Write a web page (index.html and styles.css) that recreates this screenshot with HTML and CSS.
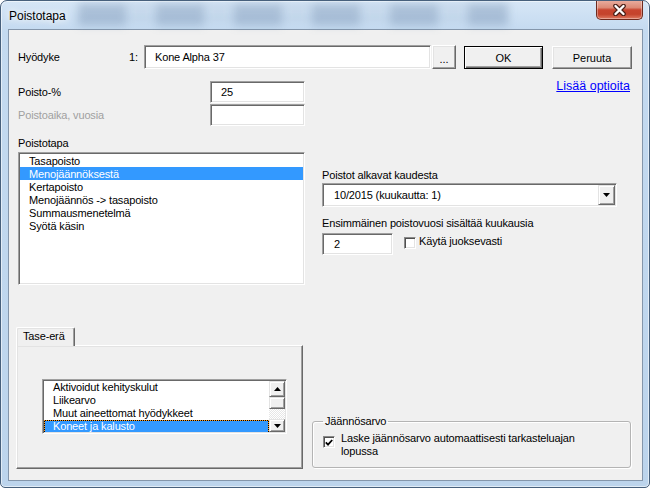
FILE: index.html
```html
<!DOCTYPE html>
<html lang="fi">
<head>
<meta charset="utf-8">
<title>Poistotapa</title>
<link rel="stylesheet" href="styles.css">
</head>
<body>
<div class="window">
  <div class="titlebar">
    <div class="glass"></div>
    <span class="title">Poistotapa</span>
    <button class="close" aria-label="Sulje">
      <svg width="15" height="12" viewBox="0 0 15 12">
        <path d="M3.5 2 L11.5 10 M11.5 2 L3.5 10" stroke="#4a2018" stroke-width="4.6" stroke-linecap="round" fill="none"/>
        <path d="M3.5 2 L11.5 10 M11.5 2 L3.5 10" stroke="#ffffff" stroke-width="2.4" stroke-linecap="round" fill="none"/>
      </svg>
    </button>
  </div>
  <div class="client">
    <div class="row-top">
      <span class="lbl-asset">Hyödyke</span>
      <span class="num">1:</span>
      <div class="field asset">Kone Alpha 37</div>
      <button class="btn dots">...</button>
      <button class="btn ok">OK</button>
      <button class="btn cancel">Peruuta</button>
    </div>
    <div class="cols">
      <div class="col-left">
        <div class="form-row first"><span>Poisto-%</span><div class="field num-field">25</div></div>
        <div class="form-row"><span class="disabled">Poistoaika, vuosia</span><div class="field num-field"></div></div>
        <div class="lbl-list">Poistotapa</div>
        <ul class="listbox">
          <li>Tasapoisto</li>
          <li class="sel">Menojäännöksestä</li>
          <li>Kertapoisto</li>
          <li>Menojäännös -&gt; tasapoisto</li>
          <li>Summausmenetelmä</li>
          <li>Syötä käsin</li>
        </ul>
        <div class="tabs">
          <div class="tab">Tase-erä</div>
          <div class="tab-panel">
            <div class="listbox2">
              <ul class="items2">
                <li>Aktivoidut kehityskulut</li>
                <li>Liikearvo</li>
                <li>Muut aineettomat hyödykkeet</li>
                <li class="sel focus">Koneet ja kalusto</li>
              </ul>
              <div class="scrollbar">
                <div class="sb-btn up"><svg width="7" height="4" viewBox="0 0 7 4"><polygon points="0,4 7,4 3.5,0" fill="#000"/></svg></div>
                <div class="sb-thumb"></div>
                <div class="sb-track"></div>
                <div class="sb-btn down"><svg width="7" height="4" viewBox="0 0 7 4"><polygon points="0,0 7,0 3.5,4" fill="#000"/></svg></div>
              </div>
            </div>
          </div>
        </div>
      </div>
      <div class="col-right">
        <a class="link" href="#">Lisää optioita</a>
        <div class="r-label first">Poistot alkavat kaudesta</div>
        <div class="combo">
          <span class="combo-text">10/2015 (kuukautta: 1)</span>
          <span class="combo-btn"><svg width="7" height="4" viewBox="0 0 7 4"><polygon points="0,0 7,0 3.5,4" fill="#000"/></svg></span>
        </div>
        <div class="r-label second">Ensimmäinen poistovuosi sisältää kuukausia</div>
        <div class="r-row">
          <div class="field months">2</div>
          <span class="checkbox"></span>
          <span class="cb-label">Käytä juoksevasti</span>
        </div>
        <fieldset class="group">
          <legend>Jäännösarvo</legend>
          <div class="group-row">
            <span class="checkbox checked"><svg width="8" height="7" viewBox="0 0 8 7"><polyline points="0.8,3.4 3,5.6 7.2,1" fill="none" stroke="#000" stroke-width="1.8"/></svg></span>
            <span class="group-label">Laske jäännösarvo automaattisesti tarkasteluajan lopussa</span>
          </div>
        </fieldset>
      </div>
    </div>
  </div>
</div>
</body>
</html>
```

FILE: styles.css
```css
html, body {
  margin: 0;
  padding: 0;
  background: #ffffff;
}

body {
  font-family: "Liberation Sans", Arial, sans-serif;
  font-size: 11px;
  letter-spacing: -0.15px;
  color: #000;
}

.window {
  width: 650px;
  height: 488px;
  box-sizing: border-box;
  border: 1px solid #47607c;
  border-radius: 7px 7px 5px 5px;
  background: linear-gradient(180deg, #d6e6f6 0px, #c4daf0 30px, #bcd4ec 100%);
  box-shadow: inset 0 0 0 1px rgba(255, 255, 255, 0.55);
  padding: 0 6px 6px 7px;
  display: flex;
  flex-direction: column;
  position: relative;
  overflow: hidden;
}

.titlebar {
  height: 28px;
  flex: none;
  display: flex;
  align-items: flex-start;
  position: relative;
}

.glass {
  position: absolute;
  left: 70px;
  top: 3px;
  width: 430px;
  height: 22px;
  background:
    repeating-linear-gradient(90deg, rgba(70, 100, 140, 0.22) 0 48px, rgba(255, 255, 255, 0) 48px 78px),
    repeating-linear-gradient(180deg, rgba(70, 100, 140, 0.12) 0 6px, rgba(255, 255, 255, 0) 6px 11px);
  filter: blur(4px);
}

.title {
  position: relative;
  margin-top: 8px;
  margin-left: 1px;
  font-size: 12px;
  line-height: 14px;
  letter-spacing: 0;
  text-shadow: 0 0 6px #fff, 0 0 10px #fff;
}

.close {
  margin-left: auto;
  margin-top: -1px;
  width: 47px;
  height: 20px;
  padding: 0;
  border: 1px solid #6e2a1e;
  border-top: none;
  border-radius: 0 0 5px 5px;
  background: linear-gradient(180deg, #eab0a2 0%, #dc8a76 40%, #c8452f 52%, #c4432c 75%, #de7a62 100%);
  box-shadow: inset 0 0 0 1px rgba(255, 255, 255, 0.35);
  display: flex;
  align-items: center;
  justify-content: center;
  position: relative;
}

.client {
  flex: 1;
  background: #f0f0f0;
  border: 1px solid #8496ab;
  box-sizing: border-box;
  padding: 15px 10px 0 7px;
  display: flex;
  flex-direction: column;
}

/* sunken field */
.field {
  box-sizing: border-box;
  background: #fff;
  border: 1px solid;
  border-color: #a0a0a0 #ffffff #ffffff #a0a0a0;
  box-shadow: inset 1px 1px 0 #696969, inset -1px -1px 0 #e3e3e3;
  display: flex;
  align-items: center;
}

/* raised button */
.btn {
  box-sizing: border-box;
  font: inherit;
  color: #000;
  background: #f0f0f0;
  border: 1px solid;
  border-color: #ffffff #696969 #696969 #ffffff;
  box-shadow: inset -1px -1px 0 #a0a0a0, inset 1px 1px 0 #e3e3e3;
  padding: 0;
  text-align: center;
}

.row-top {
  display: flex;
  align-items: center;
  height: 24px;
  margin-left: 2px;
}

.lbl-asset {
  width: 111px;
}

.num {
  width: 15px;
}

.asset {
  width: 287px;
  height: 24px;
  padding-left: 10px;
}

.dots {
  width: 24px;
  height: 24px;
  margin-left: 1px;
  line-height: 26px;
  letter-spacing: 0;
}

.ok {
  width: 79px;
  height: 23px;
  margin-left: 8px;
  align-self: flex-end;
  border-color: #000;
  box-shadow: inset 1px 1px 0 #ffffff, inset -1px -1px 0 #696969, inset -2px -2px 0 #a0a0a0;
}

.cancel {
  width: 80px;
  height: 23px;
  margin-left: 9px;
  align-self: flex-end;
}

.cols {
  flex: 1;
  display: flex;
  padding-bottom: 11px;
}

.col-left {
  width: 289px;
  display: flex;
  flex-direction: column;
}

.form-row {
  display: flex;
  align-items: center;
  justify-content: space-between;
  height: 22px;
  margin-left: 2px;
  margin-top: 1px;
}

.form-row.first {
  margin-top: 12px;
}

.disabled {
  color: #a0a0a0;
}

.num-field {
  width: 95px;
  height: 22px;
  padding-left: 10px;
}

.lbl-list {
  margin: 11px 0 0 2px;
  line-height: 13px;
}

.listbox {
  list-style: none;
  margin: 2px 0 0 2px;
  padding: 1px;
  width: 287px;
  height: 133px;
  box-sizing: border-box;
  background: #fff;
  border: 1px solid;
  border-color: #a0a0a0 #ffffff #ffffff #a0a0a0;
  box-shadow: inset 1px 1px 0 #696969, inset -1px -1px 0 #e3e3e3;
}

.listbox li,
.items2 li {
  line-height: 13px;
  padding-left: 9px;
  white-space: nowrap;
}

.listbox li {
  padding-top: 1px;
  line-height: 12px;
}

.listbox li.sel,
.items2 li.sel {
  background: #3399ff;
  color: #fff;
}

.tabs {
  margin-top: 42px;
  display: flex;
  flex-direction: column;
}

.tab {
  width: 59px;
  height: 19px;
  box-sizing: border-box;
  border: 1px solid;
  border-color: #ffffff #696969 transparent #ffffff;
  border-bottom: none;
  border-radius: 2px 2px 0 0;
  box-shadow: inset -1px 0 0 #a0a0a0, inset 1px 1px 0 #e3e3e3;
  background: #f0f0f0;
  padding-left: 6px;
  line-height: 16px;
  margin-bottom: -1px;
  position: relative;
  z-index: 1;
}

.tab-panel {
  width: 287px;
  height: 124px;
  box-sizing: border-box;
  border: 1px solid;
  border-color: #ffffff #696969 #696969 #ffffff;
  box-shadow: inset -1px -1px 0 #a0a0a0, inset 1px 1px 0 #e3e3e3;
  padding: 33px 0 0 25px;
}

.listbox2 {
  width: 245px;
  height: 55px;
  box-sizing: border-box;
  display: flex;
  padding: 1px;
  background: #fff;
  border: 1px solid;
  border-color: #a0a0a0 #ffffff #ffffff #a0a0a0;
  box-shadow: inset 1px 1px 0 #696969, inset -1px -1px 0 #e3e3e3;
}

.items2 {
  list-style: none;
  margin: 0;
  padding: 0;
  flex: 1;
  overflow: hidden;
}

.items2 li.focus {
  border: 1px dotted #ff9a1a;
  padding-left: 8px;
  line-height: 11px;
  background: linear-gradient(#3399ff, #3399ff) padding-box, linear-gradient(#000, #000) border-box;
}

.scrollbar {
  width: 16px;
  display: flex;
  flex-direction: column;
}

.sb-btn,
.sb-thumb {
  box-sizing: border-box;
  background: #f0f0f0;
  border: 1px solid;
  border-color: #e3e3e3 #696969 #696969 #e3e3e3;
  box-shadow: inset 1px 1px 0 #ffffff, inset -1px -1px 0 #a0a0a0;
  display: flex;
  align-items: center;
  justify-content: center;
}

.sb-btn.up {
  height: 16px;
}

.sb-thumb {
  height: 12px;
}

.sb-track {
  height: 10px;
  background: repeating-conic-gradient(#e6e6e6 0 25%, #ffffff 0 50%) 0 0 / 2px 2px;
}

.sb-btn.down {
  height: 13px;
}

.col-right {
  width: 319px;
  margin-left: 7px;
  display: flex;
  flex-direction: column;
}

.link {
  margin-top: 10px;
  font-size: 12.5px;
  letter-spacing: 0;
  line-height: 14px;
  align-self: flex-end;
  margin-right: 1px;
  color: #0000ff;
  text-decoration: underline;
}

.r-label {
  margin-left: 10px;
  line-height: 13px;
}

.r-label.first {
  margin-top: 76px;
}

.r-label.second {
  margin-top: 10px;
}

.combo {
  margin: 1px 0 0 10px;
  width: 295px;
  height: 24px;
  box-sizing: border-box;
  padding: 1px;
  display: flex;
  align-items: stretch;
  background: #fff;
  border: 1px solid;
  border-color: #a0a0a0 #ffffff #ffffff #a0a0a0;
  box-shadow: inset 1px 1px 0 #696969, inset -1px -1px 0 #e3e3e3;
}

.combo-text {
  flex: 1;
  padding-left: 10px;
  display: flex;
  align-items: center;
}

.combo-btn {
  width: 17px;
  box-sizing: border-box;
  background: #f0f0f0;
  border: 1px solid;
  border-color: #e3e3e3 #696969 #696969 #e3e3e3;
  box-shadow: inset 1px 1px 0 #ffffff, inset -1px -1px 0 #a0a0a0;
  display: flex;
  align-items: center;
  justify-content: center;
}

.r-row {
  margin: 3px 0 0 10px;
  display: flex;
  align-items: flex-start;
}

.months {
  width: 71px;
  height: 22px;
  padding-left: 11px;
}

.checkbox {
  width: 12px;
  height: 12px;
  box-sizing: border-box;
  background: #fff;
  border: 1px solid;
  border-color: #8a8a8a #ffffff #ffffff #8a8a8a;
  box-shadow: inset 1px 1px 0 #505050, inset -1px -1px 0 #e3e3e3;
  display: flex;
  align-items: center;
  justify-content: center;
  flex: none;
}

.r-row .checkbox {
  margin: 4px 0 0 11px;
}

.cb-label {
  margin: 2px 0 0 3px;
  line-height: 13px;
}

.group {
  margin: auto 0 1px 0;
  padding: 4px 8px 9px 10px;
  border: 1px solid #b4b4b4;
  border-radius: 3px;
  box-shadow: inset 1px 1px 0 #ffffff, 1px 1px 0 #ffffff;
  min-width: 0;
}

.group legend {
  padding: 0 2px;
  line-height: 13px;
}

.group-row {
  display: flex;
  align-items: flex-start;
}

.group-row .checkbox {
  margin-top: 4px;
}

.group-label {
  margin-left: 6px;
  width: 260px;
  line-height: 13px;
}
```
